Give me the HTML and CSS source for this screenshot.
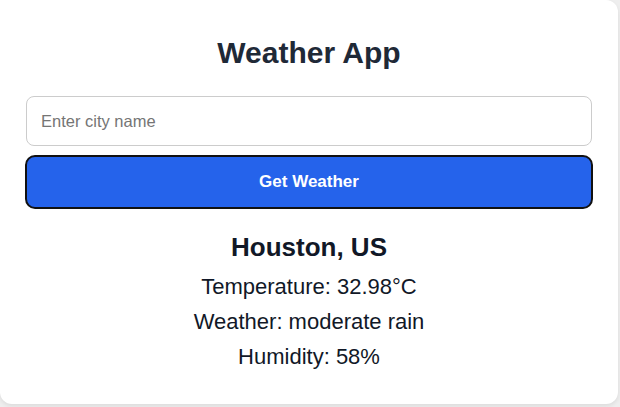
FILE: index.html
```html
<!DOCTYPE html>
<html lang="en">
<head>
<meta charset="utf-8">
<title>Weather App</title>
<link rel="stylesheet" href="styles.css">
</head>
<body>
<main class="card">
  <h1 class="title">Weather App</h1>
  <form class="search">
    <input class="city" type="text" placeholder="Enter city name">
    <button class="go" type="button">Get Weather</button>
  </form>
  <section class="result">
    <h2 class="place">Houston, US</h2>
    <p class="line">Temperature: 32.98°C</p>
    <p class="line">Weather: moderate rain</p>
    <p class="line">Humidity: 58%</p>
  </section>
</main>
</body>
</html>
```

FILE: styles.css
```css
html, body {
  margin: 0;
  padding: 0;
}
body {
  background: #eeeeee;
  font-family: "Liberation Sans", Arial, sans-serif;
  width: 620px;
  height: 407px;
  overflow: hidden;
}
.card {
  box-sizing: border-box;
  width: 618px;
  height: 404px;
  background: #ffffff;
  border-radius: 0 12px 12px 12px;
  box-shadow: 0 2px 4px rgba(0, 0, 0, 0.08);
  padding: 35px 25px 0;
  display: flex;
  flex-direction: column;
}
.title {
  margin: 0;
  font-size: 30px;
  line-height: 36px;
  font-weight: 700;
  color: #1f2937;
  text-align: center;
}
.search {
  margin-top: 25px;
  display: flex;
  flex-direction: column;
  gap: 9px;
}
.city {
  box-sizing: border-box;
  margin: 0 1px;
  height: 50px;
  border: 1px solid #cccccc;
  border-radius: 8px;
  padding: 0 14px;
  font-family: inherit;
  font-size: 16.5px;
  color: #111827;
  outline: none;
}
.city::placeholder {
  color: #757575;
}
.go {
  box-sizing: border-box;
  height: 54px;
  border: 2px solid #111111;
  border-radius: 10px;
  background: #2563eb;
  color: #ffffff;
  font-family: inherit;
  font-size: 17px;
  font-weight: 700;
}
.result {
  margin-top: 23px;
  text-align: center;
  color: #111827;
}
.place {
  margin: 0 0 6px;
  font-size: 26px;
  line-height: 31px;
  font-weight: 700;
}
.line {
  margin: 0;
  font-size: 22px;
  line-height: 35px;
}
```
